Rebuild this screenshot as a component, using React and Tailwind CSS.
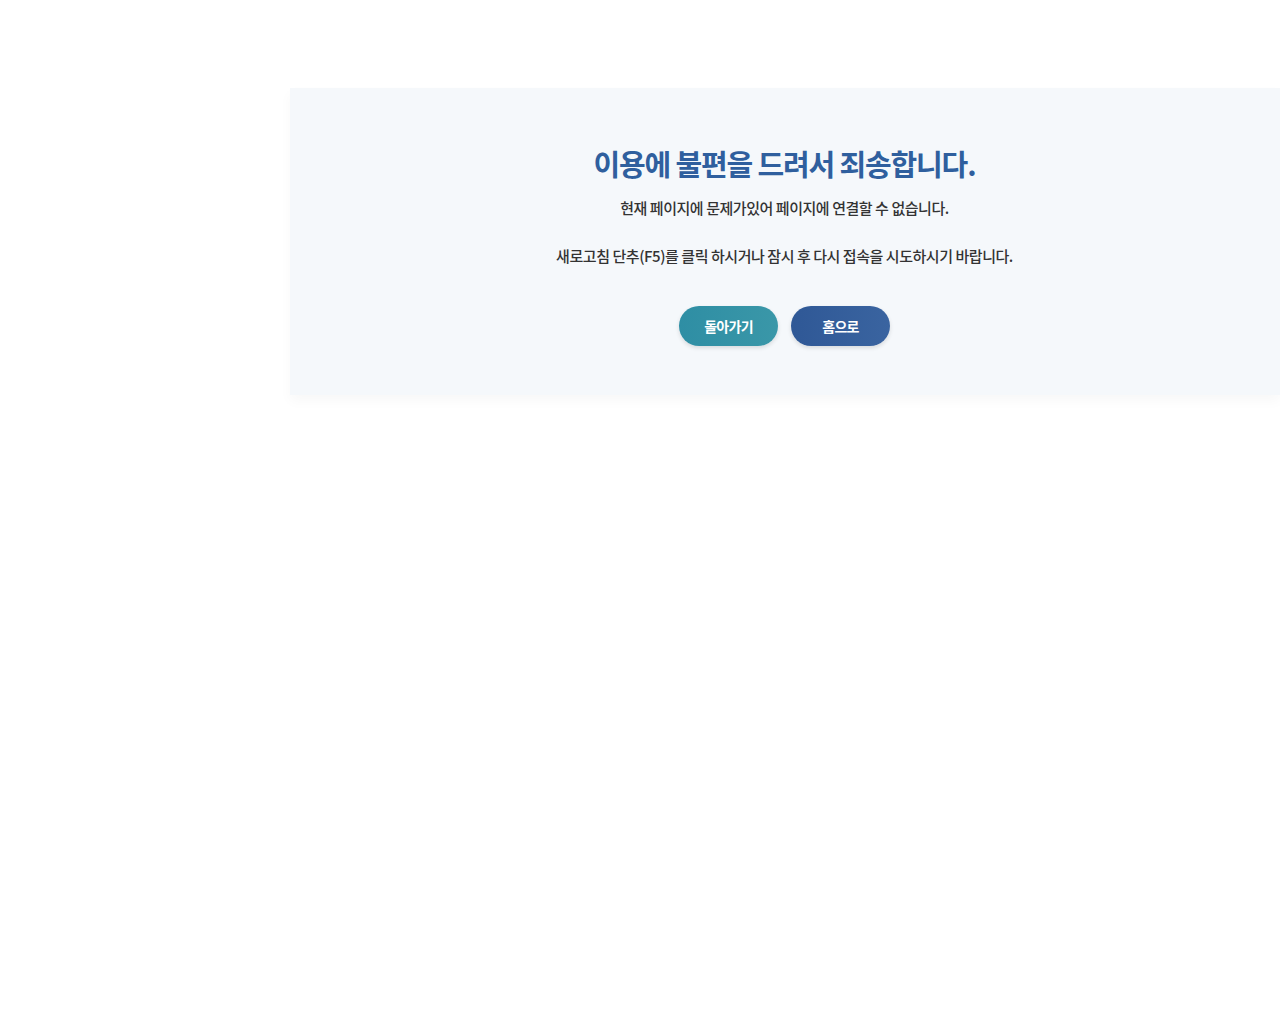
export default function App() {
  return (
    <div
      className="min-h-[1024px] bg-white"
      style={{ fontFamily: '"Noto Sans CJK KR", "Noto Sans", sans-serif' }}
    >
      <div className="pt-[88px] pl-[290px]">
        <div className="flex flex-col items-center bg-[#f5f8fb] pt-[55px] pb-[49px] pr-[1px] shadow-[0_6px_12px_rgba(0,0,0,0.03)]">
          <h1 className="text-[29px] font-bold leading-[40px] tracking-[-0.04em] text-[#2f5f9e]">
            이용에 불편을 드려서 죄송합니다.
          </h1>
          <p className="mt-[15px] text-[15px] font-medium leading-[20px] tracking-[-0.03em] text-[#333]">
            현재 페이지에 문제가있어 페이지에 연결할 수 없습니다.
          </p>
          <p className="mt-[28px] text-[15px] font-medium leading-[20px] tracking-[-0.03em] text-[#333]">
            새로고침 단추(F5)를 클릭 하시거나 잠시 후 다시 접속을 시도하시기 바랍니다.
          </p>
          <div className="mt-[40px] flex gap-[13px]">
            <button
              type="button"
              className="h-[40px] w-[99px] rounded-full bg-gradient-to-r from-[#2e8ea4] to-[#3a97a8] text-[14px] font-bold tracking-[-0.05em] text-white shadow-[0_2px_4px_rgba(0,0,0,0.12)]"
            >
              돌아가기
            </button>
            <button
              type="button"
              className="h-[40px] w-[99px] rounded-full bg-gradient-to-r from-[#2f5896] to-[#3a64a0] text-[14px] font-bold tracking-[-0.05em] text-white shadow-[0_2px_4px_rgba(0,0,0,0.12)]"
            >
              홈으로
            </button>
          </div>
        </div>
      </div>
    </div>
  );
}
